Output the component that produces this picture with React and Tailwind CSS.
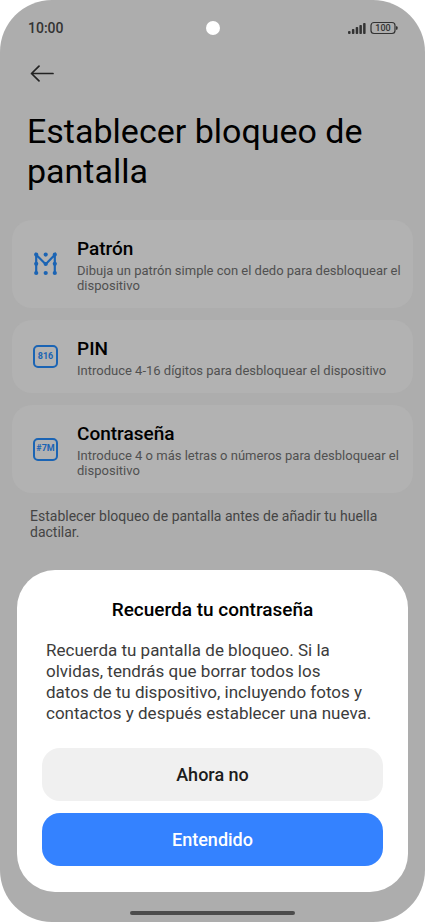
import React from 'react';

const PatternIcon = () => (
  <svg width="24" height="24" viewBox="0 0 24 24" aria-hidden="true">
    <path d="M3.2 21V2.8L12.7 12.2L21.8 2.8V21" fill="none" stroke="#1b64b4" strokeWidth="2.2" />
    <g fill="#1b64b4">
      <circle cx="3.2" cy="2.6" r="2.1" />
      <circle cx="12.7" cy="2.6" r="2.1" />
      <circle cx="21.8" cy="2.6" r="2.1" />
      <circle cx="3.2" cy="11.8" r="2.1" />
      <circle cx="12.7" cy="12" r="2.1" />
      <circle cx="21.8" cy="11.8" r="2.1" />
      <circle cx="3.2" cy="21" r="2.1" />
      <circle cx="12.7" cy="21" r="2.1" />
      <circle cx="21.8" cy="21" r="2.1" />
    </g>
  </svg>
);

const BadgeIcon = ({ children }) => (
  <span className="flex h-[23px] w-[25px] items-center justify-center rounded-[5px] border-2 border-[#1b64b4] text-[9px] font-bold text-[#1b64b4]">
    {children}
  </span>
);

const options = [
  {
    title: 'Patrón',
    text: 'Dibuja un patrón simple con el dedo para desbloquear el dispositivo',
    icon: <PatternIcon />,
  },
  {
    title: 'PIN',
    text: 'Introduce 4-16 dígitos para desbloquear el dispositivo',
    icon: <BadgeIcon>816</BadgeIcon>,
  },
  {
    title: 'Contraseña',
    text: 'Introduce 4 o más letras o números para desbloquear el dispositivo',
    icon: <BadgeIcon>#7M</BadgeIcon>,
  },
];

const StatusBar = () => (
  <div className="grid grid-cols-3 items-center pt-[18px] pr-[27px] pl-7">
    <span className="text-[14px] leading-5 font-medium text-[#333333]">10:00</span>
    <span className="h-[14px] w-[14px] justify-self-center rounded-full bg-white" />
    <svg
      width="50"
      height="14"
      viewBox="0 0 50 14"
      className="justify-self-end"
      role="img"
      aria-label="100"
    >
      <g fill="#333333">
        <rect x="0" y="10" width="2.6" height="3" rx="1" />
        <rect x="3.9" y="8" width="2.5" height="5" rx="0.8" />
        <rect x="7.7" y="6" width="2.5" height="7" rx="0.8" />
        <rect x="11.4" y="4" width="2.5" height="9" rx="0.8" />
        <rect x="15.1" y="2" width="2.5" height="11" rx="0.8" />
        <path d="M48 5.2h.6a1 1 0 0 1 1 1v1.6a1 1 0 0 1-1 1H48z" />
      </g>
      <rect x="23" y="1.5" width="24" height="11" rx="3" fill="none" stroke="#333333" strokeWidth="1.2" />
      <text x="35" y="10.4" textAnchor="middle" fontSize="9" fontWeight="500" fill="#333333">
        100
      </text>
    </svg>
  </div>
);

const OptionCard = ({ title, text, icon }) => (
  <button
    type="button"
    className="flex w-full items-center rounded-[20px] bg-[#b2b2b2] pt-[17px] pr-2 pb-[15px] pl-[21px] text-left"
  >
    <span className="flex w-11 shrink-0 pb-0.5">{icon}</span>
    <span className="flex flex-col gap-0.5">
      <span className="text-[19px] leading-6 font-medium text-black">{title}</span>
      <span className="text-[13px] leading-[15px] text-[#505050]">{text}</span>
    </span>
  </button>
);

const App = () => {
  return (
    <div className="bg-white font-['Roboto',sans-serif]">
      <main className="flex min-h-screen flex-col rounded-[52px] bg-[#adadad]">
        <StatusBar />

        <button type="button" aria-label="Atrás" className="mt-[27px] ml-[30px] self-start">
          <svg width="25" height="18" viewBox="0 0 25 18" fill="none" stroke="#222222" strokeWidth="1.7" strokeLinecap="round" strokeLinejoin="round">
            <path d="M23 8.5H1.5M9 1.2L1.5 8.5L9 15.8" />
          </svg>
        </button>

        <h1 className="mt-7 px-[27px] text-[34px] leading-10 text-black">
          Establecer bloqueo de pantalla
        </h1>

        <div className="mt-[29px] flex flex-col gap-3 px-3">
          {options.map((option) => (
            <OptionCard key={option.title} {...option} />
          ))}
        </div>

        <p className="mt-[15px] px-[30px] text-[14px] leading-4 text-[#444444]">
          Establecer bloqueo de pantalla antes de añadir tu huella dactilar.
        </p>

        <section
          role="dialog"
          aria-labelledby="dialog-title"
          className="mx-[17px] mt-auto rounded-[38px] bg-white px-[25px] pt-7 pb-[26px]"
        >
          <h2 id="dialog-title" className="text-center text-[19px] leading-6 font-medium text-black">
            Recuerda tu contraseña
          </h2>
          <p className="mt-[18px] px-1 text-[17px] leading-[21px] text-[#3c3c3c]">
            Recuerda tu pantalla de bloqueo. Si la
            <br />
            olvidas, tendrás que borrar todos los
            <br />
            datos de tu dispositivo, incluyendo fotos y contactos y después establecer una nueva.
          </p>
          <button
            type="button"
            className="mt-6 h-[53px] w-full rounded-[18px] bg-[#f0f0f0] text-[18px] font-medium text-[#1c1c1c]"
          >
            Ahora no
          </button>
          <button
            type="button"
            className="mt-3 h-[53px] w-full rounded-[18px] bg-[#3482ff] text-[18px] font-medium text-white"
          >
            Entendido
          </button>
        </section>

        <div className="mt-[19px] mb-[7px] h-1 w-[165px] self-center rounded-full bg-[#4c4c4c]" />
      </main>
    </div>
  );
};

export default App;
